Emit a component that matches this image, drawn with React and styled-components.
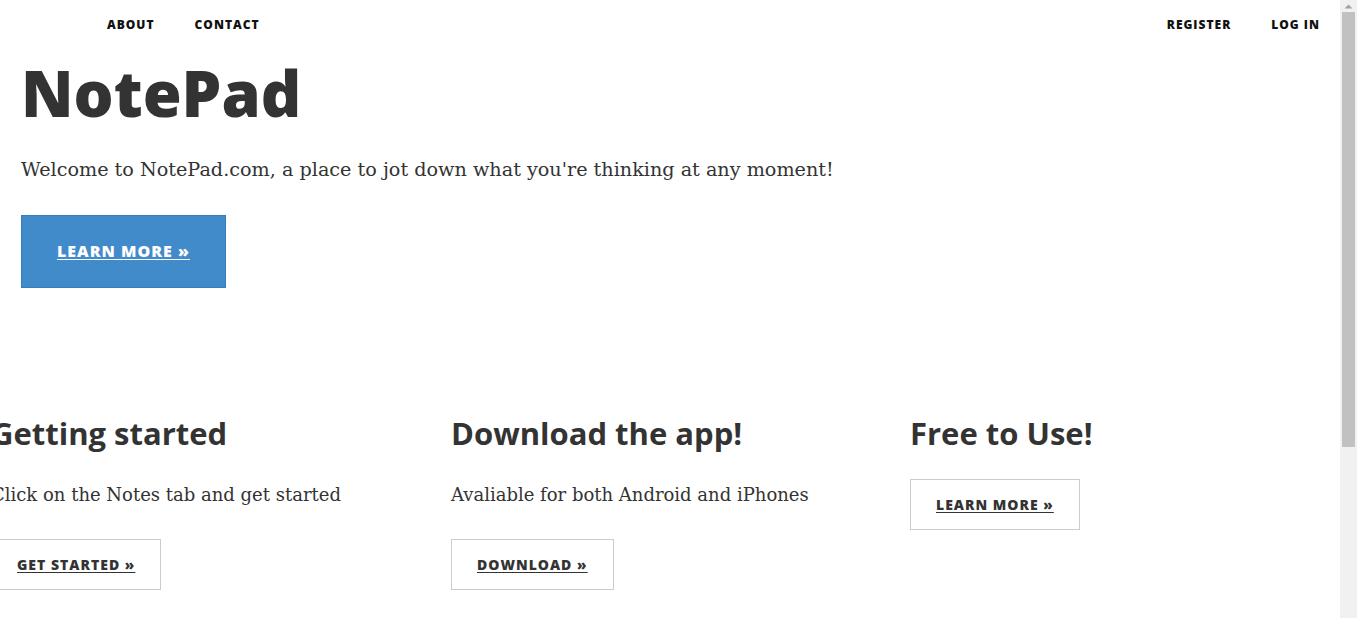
import React from "react";
import styled, { createGlobalStyle } from "styled-components";

const Global = createGlobalStyle`
  html, body { margin: 0; padding: 0; background: #fff; overflow: hidden; }
  body { font-family: "DejaVu Serif", "Liberation Serif", serif; color: #333; }
`;

const Window = styled.div`
  display: flex;
  height: 100vh;
  overflow: hidden;
`;

const Page = styled.main`
  flex: 1;
  min-width: 0;
  overflow: hidden;
`;

const ScrollTrack = styled.aside`
  flex: 0 0 17px;
  background: #f1f1f1;
  display: flex;
  flex-direction: column;
  align-items: center;
`;

const ScrollArrow = styled.div`
  height: 12px;
  display: flex;
  align-items: center;
  justify-content: center;
`;

const ScrollThumb = styled.div`
  width: 13px;
  height: 435px;
  background: #c1c1c1;
`;

const Nav = styled.nav`
  display: flex;
  justify-content: space-between;
  align-items: center;
  height: 50px;
  padding-left: 87px;
`;

const NavGroup = styled.ul`
  display: flex;
  margin: 0;
  padding: 0;
  list-style: none;
`;

const NavLink = styled.a`
  display: block;
  padding: 0 20px;
  line-height: 48px;
  font-family: "Open Sans", sans-serif;
  font-weight: 800;
  font-size: 12px;
  letter-spacing: 1px;
  text-transform: uppercase;
  color: #111;
  text-decoration: none;
`;

const Hero = styled.header`
  padding-left: 21px;
`;

const Title = styled.h1`
  margin: 8px 0 0;
  font-family: "Open Sans", sans-serif;
  font-weight: 800;
  font-size: 63px;
  line-height: 70px;
  color: #333;
`;

const Lead = styled.p`
  margin: 27px 0 0;
  font-size: 19.2px;
  line-height: 30px;
  color: #333;
`;

const Button = styled.a`
  display: inline-block;
  box-sizing: border-box;
  font-family: "Open Sans", sans-serif;
  font-weight: 800;
  text-transform: uppercase;
  letter-spacing: 1px;
  text-decoration: underline;
  text-underline-offset: 2px;
  background: ${(p) => (p.$primary ? "#428bca" : "#fff")};
  color: ${(p) => (p.$primary ? "#fff" : "#333")};
  border: 1px solid ${(p) => (p.$primary ? "#357ebd" : "#ccc")};
  font-size: ${(p) => (p.$primary ? "16px" : "14px")};
  line-height: ${(p) => (p.$primary ? "21px" : "17px")};
  padding: ${(p) => (p.$primary ? "25px 35px" : "16px 25px")};
  margin-top: ${(p) => p.$mt || "0"};
`;

const FeatureClip = styled.section`
  overflow: hidden;
  margin-top: 127px;
`;

const FeatureGrid = styled.div`
  display: grid;
  grid-template-columns: 460px 459px 460px;
  margin-left: -9px;
`;

const Feature = styled.div`
  display: flex;
  flex-direction: column;
  align-items: flex-start;
`;

const FeatureTitle = styled.h2`
  margin: 0;
  font-family: "Open Sans", sans-serif;
  font-weight: 700;
  font-size: 31px;
  line-height: 36px;
  color: #333;
  white-space: nowrap;
`;

const FeatureText = styled.p`
  margin: 29px 0 0;
  font-size: 18px;
  line-height: 30px;
  color: #333;
  white-space: nowrap;
`;

const features = [
  { title: "Getting started", text: "Click on the Notes tab and get started", cta: "Get Started »" },
  { title: "Download the app!", text: "Avaliable for both Android and iPhones", cta: "Download »" },
  { title: "Free to Use!", text: null, cta: "Learn More »" },
];

export default function App() {
  return (
    <>
      <Global />
      <Window>
        <Page>
          <Nav>
            <NavGroup>
              <li><NavLink href="#">About</NavLink></li>
              <li><NavLink href="#">Contact</NavLink></li>
            </NavGroup>
            <NavGroup>
              <li><NavLink href="#">Register</NavLink></li>
              <li><NavLink href="#">Log In</NavLink></li>
            </NavGroup>
          </Nav>
          <Hero>
            <Title>NotePad</Title>
            <Lead>Welcome to NotePad.com, a place to jot down what you're thinking at any moment!</Lead>
            <Button href="#" $primary $mt="30px">Learn More »</Button>
          </Hero>
          <FeatureClip>
            <FeatureGrid>
              {features.map((f) => (
                <Feature key={f.title}>
                  <FeatureTitle>{f.title}</FeatureTitle>
                  {f.text && <FeatureText>{f.text}</FeatureText>}
                  <Button href="#" $mt={f.text ? "29px" : "28px"}>{f.cta}</Button>
                </Feature>
              ))}
            </FeatureGrid>
          </FeatureClip>
        </Page>
        <ScrollTrack aria-hidden="true">
          <ScrollArrow>
            <svg width="9" height="5" viewBox="0 0 9 5">
              <path d="M0.5 4.5 L4.5 0.5 L8.5 4.5 Z" fill="#a3a3a3" />
            </svg>
          </ScrollArrow>
          <ScrollThumb />
        </ScrollTrack>
      </Window>
    </>
  );
}
